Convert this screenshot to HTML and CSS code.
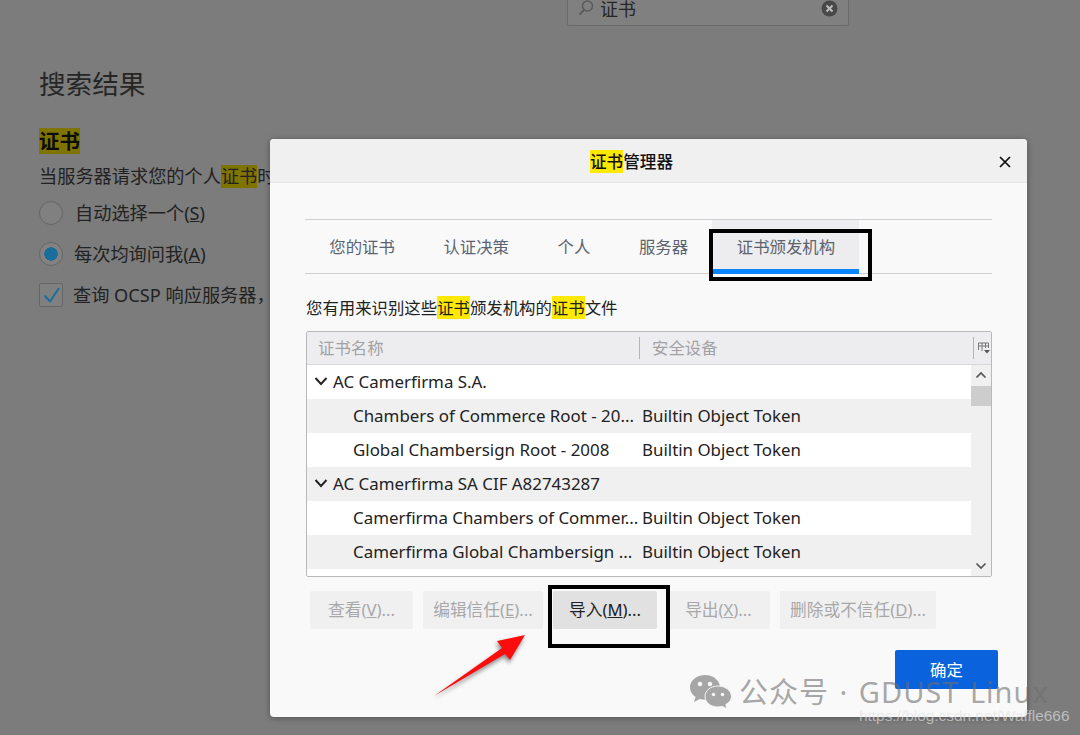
FILE: index.html
```html
<!DOCTYPE html>
<html lang="zh-CN">
<head>
    <meta charset="UTF-8">
    <title>证书管理器</title>
    <link rel="stylesheet" href="styles.css">
</head>
<body>
    <div class="page">
        <div class="search-row">
            <div class="search-box">
                <svg class="search-icon" width="16" height="16" viewBox="0 0 16 16"><circle cx="9.5" cy="6" r="5" fill="none" stroke="#5a5a5a" stroke-width="1.6"/><path d="M6 10 L1.5 14.5" stroke="#5a5a5a" stroke-width="1.8"/></svg>
                <span class="search-text">证书</span>
                <svg class="search-clear" width="17" height="17" viewBox="0 0 17 17"><circle cx="8.5" cy="8.5" r="8" fill="#484848"/><path d="M5.5 5.5 L11.5 11.5 M11.5 5.5 L5.5 11.5" stroke="#bdbdbd" stroke-width="2"/></svg>
            </div>
        </div>
        <h1>搜索结果</h1>
        <h2><mark class="dim-mark">证书</mark></h2>
        <p class="desc">当服务器请求您的个人<mark class="dim-mark">证书</mark>时</p>
        <div class="option"><span class="radio"></span><span class="option-label">自动选择一个(<u>S</u>)</span></div>
        <div class="option"><span class="radio radio-on"></span><span class="option-label">每次均询问我(<u>A</u>)</span></div>
        <div class="option"><span class="check">
            <svg width="22" height="22" viewBox="0 0 22 22"><path d="M4.500 11.500 L10 17.500 L19 4" fill="none" stroke="#1b6d9c" stroke-width="2"/></svg>
        </span><span class="option-label">查询 OCSP 响应服务器，</span></div>
    </div>

    <div class="dialog">
        <div class="dialog-title">
            <span><mark>证书</mark>管理器</span>
            <svg class="dialog-close" width="12" height="12" viewBox="0 0 12 12"><path d="M1 1 L11 11 M11 1 L1 11" stroke="#0c0c0d" stroke-width="1.7"/></svg>
        </div>
        <div class="dialog-body">
            <div class="tabs">
                <div class="tab">您的证书</div>
                <div class="tab">认证决策</div>
                <div class="tab">个人</div>
                <div class="tab">服务器</div>
                <div class="tab tab-active">证书颁发机构</div>
            </div>
            <p class="intro">您有用来识别这些<mark>证书</mark>颁发机构的<mark>证书</mark>文件</p>
            <div class="tree">
                <div class="tree-head">
                    <div class="col-name">证书名称</div>
                    <div class="col-device">安全设备</div>
                    <svg class="col-picker" width="12" height="12" viewBox="0 0 12 12"><path d="M0.5 8 V1 H10.5 V6 M0.5 4 H10.5 M4 1 V9 M7.5 1 V6" fill="none" stroke="#777" stroke-width="1"/><path d="M6 8 H12 L9 11.5 Z" fill="#555"/></svg>
                </div>
                <div class="tree-main">
                    <div class="rows">
                        <div class="row"><svg class="twisty" width="14" height="10" viewBox="0 0 14 10"><path d="M1.5 2 L7 8 L12.5 2" fill="none" stroke="#222" stroke-width="1.9"/></svg><span>AC Camerfirma S.A.</span></div>
                        <div class="row row-child"><span class="cell-name">Chambers of Commerce Root - 20...</span><span class="cell-device">Builtin Object Token</span></div>
                        <div class="row row-child"><span class="cell-name">Global Chambersign Root - 2008</span><span class="cell-device">Builtin Object Token</span></div>
                        <div class="row"><svg class="twisty" width="14" height="10" viewBox="0 0 14 10"><path d="M1.5 2 L7 8 L12.5 2" fill="none" stroke="#222" stroke-width="1.9"/></svg><span>AC Camerfirma SA CIF A82743287</span></div>
                        <div class="row row-child"><span class="cell-name">Camerfirma Chambers of Commer...</span><span class="cell-device">Builtin Object Token</span></div>
                        <div class="row row-child"><span class="cell-name">Camerfirma Global Chambersign ...</span><span class="cell-device">Builtin Object Token</span></div>
                    </div>
                    <div class="scrollbar">
                        <svg width="12" height="8" viewBox="0 0 12 8"><path d="M1.5 6.5 L6 2 L10.5 6.5" fill="none" stroke="#555" stroke-width="1.7"/></svg>
                        <div class="scroll-thumb"></div>
                        <svg class="scroll-down" width="12" height="8" viewBox="0 0 12 8"><path d="M1.5 1.5 L6 6 L10.5 1.5" fill="none" stroke="#555" stroke-width="1.7"/></svg>
                    </div>
                </div>
            </div>
            <div class="actions">
                <button class="btn btn-view">查看(<u>V</u>)...</button>
                <button class="btn btn-trust">编辑信任(<u>E</u>)...</button>
                <button class="btn btn-import">导入(<u>M</u>)...</button>
                <button class="btn btn-view">导出(<u>X</u>)...</button>
                <button class="btn btn-delete">删除或不信任(<u>D</u>)...</button>
            </div>
            <div class="footer">
                <button class="btn-primary">确定</button>
            </div>
        </div>
    </div>

    <div class="mark-box mark-tab"></div>
    <div class="mark-box mark-import"></div>
    <svg class="arrow" width="110" height="80" viewBox="0 0 110 80">
        <polygon points="3,66 71,18 66,11 94,5 79,30 74,24" fill="#fb0d0d"/>
    </svg>

    <div class="watermark">
        <svg width="42" height="34" viewBox="0 0 42 34"><path d="M15 0 C6.7 0 0 5.5 0 12.5 C0 16.5 2.2 19.8 5.6 22 L4 27 L9.8 24 C11.5 24.6 13.2 24.8 15 24.8 C24 24.8 30 18.5 30 12.5 C30 5.5 23.3 0 15 0 Z" fill="#a6a6a6"/><circle cx="10" cy="9" r="2.3" fill="#f6f6f6"/><circle cx="20" cy="9" r="2.3" fill="#f6f6f6"/><path d="M28 11 C20.500 11 15 15.800 15 21.500 C15 27.200 20.500 32 28 32 C29.500 32 31 31.800 32.300 31.300 L37 34 L35.800 29.500 C39.500 27.500 41.500 24.700 41.500 21.500 C41.500 15.800 35.500 11 28 11 Z" fill="#a6a6a6" stroke="#f6f6f6" stroke-width="1"/><circle cx="23.500" cy="19.500" r="1.800" fill="#f6f6f6"/><circle cx="32.500" cy="19.500" r="1.800" fill="#f6f6f6"/></svg>
        <span>公众号 · GDUST Linux</span>
    </div>
    <div class="csdn-mark">https://blog.csdn.net/Waffle666</div>
</body>
</html>
```

FILE: styles.css
```css
* {
    box-sizing: border-box;
}

html, body {
    margin: 0;
    height: 100%;
    overflow: hidden;
}

body {
    position: relative;
    background: #7c7c7c;
    color: #0c0c0d;
    font-family: "Noto Sans", "Noto Sans CJK SC", sans-serif;
    font-size: 16.4px;
}

mark {
    background: #ffe900;
    color: inherit;
}

.page {
    padding-left: 39px;
    color: #222;
}

.search-row {
    display: flex;
    justify-content: flex-start;
    padding-left: 528px;
}

.search-box {
    display: flex;
    align-items: center;
    width: 282px;
    height: 36px;
    margin-top: -10px;
    padding: 0 10px;
    border: 1px solid #6a6a6a;
    border-radius: 2px;
    background: #808080;
}

.search-icon {
    flex: none;
}

.search-text {
    margin-left: 6px;
    padding-top: 2px;
    font-size: 18px;
    line-height: 1;
    color: #262626;
}

.search-clear {
    margin-left: auto;
}

h1 {
    margin: 40px 0 0;
    font-size: 26.6px;
    font-weight: 400;
    line-height: 36px;
    color: #262626;
}

h2 {
    margin: 26px 0 0;
    font-size: 20.500px;
    line-height: 26px;
    font-weight: 700;
    color: #0c0c0c;
}

.dim-mark {
    background: #807400;
    display: inline-block;
    line-height: 26px;
}

.desc {
    margin: 9px 0 0;
    font-size: 18.200px;
    line-height: 26px;
    white-space: nowrap;
}

.desc .dim-mark {
    line-height: 23px;
    vertical-align: baseline;
}

.option {
    display: flex;
    align-items: center;
    height: 41px;
    font-size: 18.200px;
    color: #222;
}

.desc + .option {
    margin-top: 3px;
}

.option-label {
    margin-bottom: 2px;
}

.radio {
    flex: none;
    width: 24px;
    height: 24px;
    border: 1px solid #666;
    border-radius: 50%;
    background: #808080;
    margin-right: 12px;
}

.radio-on {
    border: 1px solid #666;
    background: radial-gradient(circle, #1b6d9c 0 6.500px, #828282 7px);
    margin-right: 11px;
}

.check {
    flex: none;
    display: flex;
    align-items: center;
    justify-content: center;
    width: 24px;
    height: 24px;
    border: 1px solid #666;
    border-radius: 2px;
    background: #808080;
    margin-right: 10px;
}

.dialog {
    position: absolute;
    left: 270px;
    top: 139px;
    width: 757px;
    height: 578px;
    display: flex;
    flex-direction: column;
    border-radius: 4px;
    background: #f9f9fa;
    box-shadow: 0 1px 6px rgba(0, 0, 0, 0.35);
    overflow: hidden;
}

.dialog-title {
    position: relative;
    flex: none;
    display: flex;
    align-items: center;
    justify-content: center;
    height: 44px;
    padding-right: 34px;
    border-bottom: 1px solid #e4e4e6;
    background: #f0f0f1;
    font-size: 16.600px;
    font-weight: 500;
    color: #111;
}

.dialog-close {
    position: absolute;
    right: 16px;
    top: 17px;
}

.dialog-body {
    flex: 1;
    padding: 36px 35px 0 35px;
}

.tabs {
    display: flex;
    height: 55px;
    width: 687px;
    border-top: 1px solid #cfcfd1;
    border-bottom: 1px solid #cfcfd1;
}

.tab {
    padding: 0 24.300px;
    line-height: 53px;
    color: #5b6370;
}

.tab-active {
    background: #ededf0;
    border-bottom: 5px solid #0a84ff;
    height: 54px;
    margin-bottom: -1px;
}

.intro {
    margin: 19px 0 0 1px;
    line-height: 30px;
    color: #222;
}

.tree {
    width: 686px;
    height: 246px;
    margin: 8px 0 0 1px;
    border: 1px solid #b9b9bb;
    border-radius: 2px;
    background: #fff;
}

.tree-head {
    position: relative;
    display: flex;
    align-items: center;
    height: 33px;
    border-bottom: 1px solid #d7d7d9;
    background: #ededf0;
    color: #a2a2a4;
}

.col-name {
    width: 333px;
    padding-left: 11px;
    border-right: 1px solid #b5b5b7;
    line-height: 22px;
}

.col-device {
    width: 334px;
    padding-left: 12px;
    border-right: 1px solid #b5b5b7;
    line-height: 22px;
}

.col-picker {
    margin-left: 4px;
}

.tree-main {
    display: flex;
    height: 211px;
}

.rows {
    flex: 1;
    overflow: hidden;
}

.row {
    display: flex;
    align-items: center;
    height: 34px;
    padding-left: 7px;
    padding-bottom: 2px;
    font-size: 16.900px;
    color: #222;
    white-space: nowrap;
}

.row:nth-child(even) {
    background: #f0f0f0;
}

.twisty {
    margin-right: 5px;
}

.row-child {
    padding-left: 46px;
}

.cell-name {
    width: 289px;
    overflow: hidden;
}

.scrollbar {
    flex: none;
    position: relative;
    display: flex;
    flex-direction: column;
    align-items: center;
    width: 20px;
    height: 211px;
    padding-top: 6px;
    background: #f0f0f0;
}

.scroll-thumb {
    width: 100%;
    height: 20px;
    margin-top: 7px;
    background: #cdcdcd;
}

.scroll-down {
    margin-top: auto;
    margin-bottom: 6px;
}

.actions {
    display: flex;
    gap: 10px;
    margin: 14px 0 0 5px;
}

.btn {
    height: 38px;
    padding: 0 0 3px;
    border: 0;
    border-radius: 2px;
    background: #f0f0f1;
    color: #a8a8a9;
    font: inherit;
    font-size: 16.700px;
    white-space: nowrap;
}

.btn-view {
    width: 103px;
}

.btn-trust {
    width: 120px;
}

.btn-import {
    width: 104px;
    background: #e1e1e2;
    color: #222;
}

.btn-delete {
    width: 156px;
}

.footer {
    display: flex;
    justify-content: flex-end;
    margin: 21px -6px 0 0;
}

.btn-primary {
    width: 103px;
    height: 39px;
    padding: 0 0 2px;
    border: 0;
    border-radius: 2px;
    background: #0a63dc;
    color: #fff;
    font: inherit;
}

.mark-box {
    position: absolute;
    border: 4px solid #000;
}

.mark-tab {
    left: 709px;
    top: 229px;
    width: 163px;
    height: 52px;
}

.mark-import {
    left: 548px;
    top: 585px;
    width: 122px;
    height: 63px;
}

.arrow {
    position: absolute;
    left: 431px;
    top: 630px;
    filter: drop-shadow(-1px 3px 2px rgba(0, 0, 0, 0.45));
}

.watermark {
    position: absolute;
    left: 690px;
    top: 675px;
    display: flex;
    align-items: center;
    gap: 7px;
    color: rgba(110, 110, 110, 0.6);
    font-size: 29px;
    letter-spacing: 1px;
    word-spacing: 2px;
    line-height: 34px;
    white-space: nowrap;
}

.csdn-mark {
    position: absolute;
    left: 859px;
    top: 704px;
    font-family: "Liberation Sans", sans-serif;
    font-size: 15.400px;
    line-height: 24px;
    color: rgba(225, 225, 225, 0.65);
    white-space: nowrap;
}
```
